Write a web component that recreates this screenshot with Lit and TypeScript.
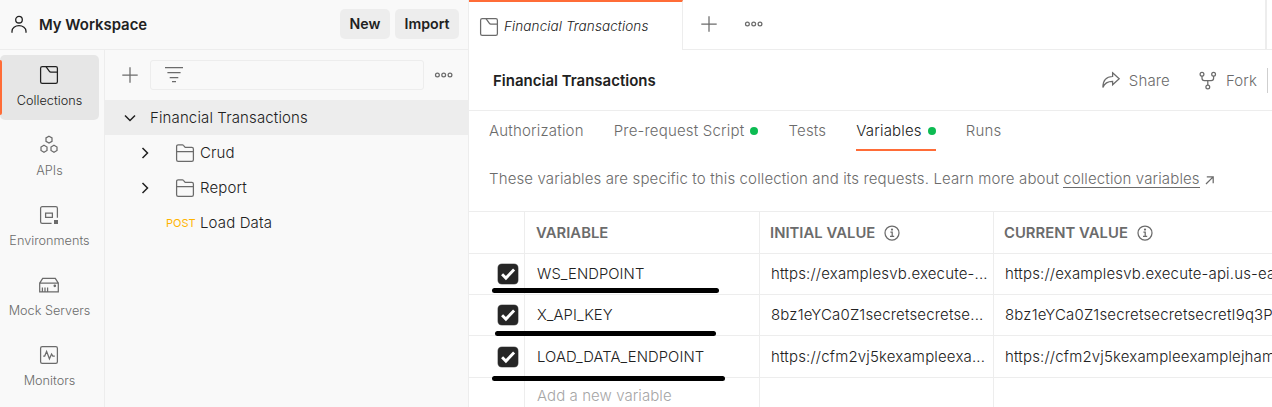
import { LitElement, html, svg, css, nothing } from "lit";
import { customElement, property } from "lit/decorators.js";
import { classMap } from "lit/directives/class-map.js";

const shapes: Record<string, unknown> = {
  user: svg`<circle cx="10" cy="5.7" r="3.3"/><path d="M3 18.8v-1.6a7 5.6 0 0 1 14 0v1.6"/>`,
  collection: svg`<rect x="1.6" y="1.6" width="16.8" height="16.8" rx="1.6"/><path d="M7 1.6l3.6 4.9q.4.5 1 .5h6.8"/>`,
  apis: svg`<path d="M10 1.2l3 1.7v3.5l-3 1.7-3-1.7V2.9zM5 10.3l3 1.7v3.5l-3 1.7-3-1.7V12zM15 10.3l3 1.7v3.5l-3 1.7-3-1.7V12z"/>`,
  environments: svg`<path d="M12.6 18.4H3.2a1.6 1.6 0 0 1-1.6-1.6V3.2a1.6 1.6 0 0 1 1.6-1.6h13.6a1.6 1.6 0 0 1 1.6 1.6v9.6M6.6 8h6.8v4.4H6.6z"/><rect x="15" y="15" width="4" height="4" fill="currentColor" stroke="none"/>`,
  mock: svg`<path d="M.7 8.2v8.6h18.6V8.2zM.7 8.2l3-4.8h12.6l3 4.8M3.4 12.4v4M6 12.4v4M8.6 12.4v4"/><circle cx="15.8" cy="10.8" r=".7" fill="currentColor"/>`,
  monitors: svg`<rect x="1.6" y="1.6" width="16.8" height="16.8" rx="1.6"/><path d="M4.2 11h1.5L7.6 6.4l2.8 7.4L12.6 9l1.2 2h2"/>`,
  plus: svg`<path d="M10 2.3v15.4M2.3 10h15.4"/>`,
  filter: svg`<path d="M1 2.5h18M3.4 7.5h13.2M5.7 12.5h8.6M8 16.6h4"/>`,
  more: svg`<circle cx="3.4" cy="10" r="1.9"/><circle cx="9.7" cy="10" r="1.9"/><circle cx="16" cy="10" r="1.9"/>`,
  down: svg`<path d="M5 7.5l5 5 5-5"/>`,
  right: svg`<path d="M7.5 5l5 5-5 5"/>`,
  folder: svg`<path d="M1.6 16.8V3.4a1.6 1.6 0 0 1 1.6-1.6h4.2q.6 0 1 .5l1.8 2h6.6a1.6 1.6 0 0 1 1.6 1.6v10.9a1.6 1.6 0 0 1-1.6 1.6H3.2a1.6 1.6 0 0 1-1.6-1.6zM1.6 8.6h16.8"/>`,
  share: svg`<path d="M11.6 2.8l6.6 6-6.6 6v-3.4C6.8 11.4 3.6 13 1.9 17.4 1.9 10.4 5.6 6.6 11.6 6.5z"/>`,
  fork: svg`<circle cx="4" cy="4.2" r="1.9"/><circle cx="15.6" cy="4.2" r="1.9"/><circle cx="9.8" cy="16.9" r="1.9"/><path d="M4 6.1v2.2a2.4 2.4 0 0 0 2.4 2.4h6.8a2.4 2.4 0 0 0 2.4-2.4V6.1M9.8 10.7V15"/>`,
  info: svg`<circle cx="10" cy="10" r="7"/><path d="M8.4 9.2h1.8v4.2M8 13.4h4.2"/><circle cx="10" cy="6.6" r=".5" fill="currentColor"/>`,
  external: svg`<path d="M6 14l6.9-6.9M6.8 6.8h6.4v6.4"/>`,
};

@customElement("ui-icon")
class UiIcon extends LitElement {
  @property() name = "";
  static styles = css`
    :host { display: block; flex: none; width: 20px; height: 20px; color: #6b6b6b; }
    svg { display: block; width: 100%; height: 100%; fill: none; stroke: currentColor; stroke-width: var(--stroke, 1.25); }
  `;
  render() {
    return html`<svg viewBox="0 0 20 20">${shapes[this.name]}</svg>`;
  }
}

const nav = [
  { icon: "collection", label: "Collections" },
  { icon: "apis", label: "APIs" },
  { icon: "environments", label: "Environments" },
  { icon: "mock", label: "Mock Servers" },
  { icon: "monitors", label: "Monitors" },
];

const tabs = [
  { label: "Authorization" },
  { label: "Pre-request Script", dot: true },
  { label: "Tests" },
  { label: "Variables", dot: true, active: true },
  { label: "Runs" },
];

const rows = [
  { name: "WS_ENDPOINT", initial: "https://examplesvb.execute-...", current: "https://examplesvb.execute-api.us-ea" },
  { name: "X_API_KEY", initial: "8bz1eYCa0Z1secretsecretse...", current: "8bz1eYCa0Z1secretsecretsecretI9q3P" },
  { name: "LOAD_DATA_ENDPOINT", initial: "https://cfm2vj5kexampleexa...", current: "https://cfm2vj5kexampleexamplejham" },
];

@customElement("app-root")
class AppRoot extends LitElement {
  static styles = css`
    :host { display: block; width: 1272px; height: 407px; overflow: hidden; position: relative; background: #fff; color: #212121; font: 350 15px/20px Inter, "Liberation Sans", sans-serif; letter-spacing: 0.13px; white-space: nowrap; }
    * { box-sizing: border-box; }
    .app { display: grid; grid-template-columns: 469px 803px; height: 407px; }
    .left { display: grid; grid-template-rows: 50px 357px; background: #f9f9f9; border-right: 1px solid #ededed; }
    .top { display: flex; align-items: center; padding: 0 9px; border-bottom: 1px solid #ededed; letter-spacing: 0; }
    .top ui-icon { color: #212121; margin-top: -1px; --stroke: 1.3; }
    .ws { margin-left: 10px; flex: 1; font-weight: 600; font-size: 14.9px; }
    .btn { height: 30px; margin-top: -1px; padding: 5px 0; border-radius: 5px; background: #ededed; font-weight: 600; font-size: 14.2px; text-align: center; }
    .new { width: 50px; margin-right: 5px; }
    .import { width: 64px; }
    .body { display: grid; grid-template-columns: 105px 363px; }
    .nav { display: flex; flex-direction: column; gap: 5px; padding-top: 5px; border-right: 1px solid #ededed; letter-spacing: 0; }
    .item { width: 99px; height: 65px; padding-top: 10px; display: flex; flex-direction: column; align-items: center; gap: 7px; color: #6b6b6b; font-size: 12.7px; line-height: 18px; }
    .item ui-icon { margin-right: 1px; }
    .item.on { position: relative; background: #e6e6e6; border-radius: 5px; color: #212121; }
    .item.on ui-icon { color: #212121; }
    .item.on::before { content: ""; position: absolute; left: 0; top: 5px; width: 2px; height: 55px; background: #ff6c37; border-radius: 0 2px 2px 0; }
    .tools { display: flex; align-items: center; height: 50px; padding-left: 15px; }
    .search { width: 274px; height: 30px; margin: 0 10px; padding: 4px 13px; border: 1px solid #ededed; border-radius: 3px; }
    .row { display: flex; align-items: center; height: 35px; padding-left: 30px; color: #212121; }
    .row.on { background: #ededed; padding-left: 15px; }
    .row.on ui-icon { margin-right: 10px; }
    .arrow { color: #212121; --stroke: 1.5; }
    .folder { margin: 0 5px 0 20px; }
    .post { width: 35px; padding-left: 1px; margin-left: 30px; color: #ffb400; font-size: 11px; font-weight: 430; letter-spacing: 0; }
    .tabbar { display: flex; height: 50px; }
    .tab { display: flex; align-items: center; width: 214px; padding: 1px 0 0 10px; border-right: 1px solid #ededed; border-top: 2px solid #ff6c37; font-size: 13.5px; font-style: italic; letter-spacing: 0.1px; }
    .tab span { margin-left: 5px; margin-top: -1px; }
    .rest { flex: 1; display: flex; align-items: center; padding: 0 0 1px 16px; border-bottom: 1px solid #ededed; }
    .rest ui-icon { margin-right: 25px; }
    .edge { width: 2px; height: 49px; margin: 1px 5px 0 auto; background: #ededed; }
    .head { display: flex; align-items: center; height: 61px; padding-left: 24px; border-bottom: 1px solid #ededed; color: #6b6b6b; }
    .head span { padding-top: 2px; }
    .title { flex: 1; font-weight: 600; color: #212121; letter-spacing: 0; }
    .head ui-icon { margin-right: 8px; }
    .share { margin-right: 28px; }
    .bar { width: 1px; height: 25px; margin: 0 4px 0 10px; background: #cfcfcf; }
    .tabs { display: flex; gap: 30px; height: 40px; padding-left: 20px; color: #6b6b6b; letter-spacing: 0.19px; }
    .t { display: flex; align-items: center; gap: 6px; height: 40px; padding-top: 2px; border-bottom: 2.5px solid transparent; }
    .t.on { color: #212121; border-color: #ff6c37; }
    .dot { width: 8px; height: 8px; border-radius: 50%; background: #0cbb52; }
    .desc { display: flex; align-items: center; height: 60px; padding: 0 0 4px 20px; color: #6b6b6b; }
    .link { margin-left: 4px; border-bottom: 1px solid #6b6b6b; line-height: 17px; }
    .desc ui-icon { margin-top: 1px; }
    .table { display: grid; grid-template-columns: 56px 235px 234px 278px; grid-template-rows: 42px 41px 41px 42px 36px; border-top: 1px solid #ededed; }
    .c { display: flex; align-items: center; border-right: 1px solid #ededed; border-bottom: 1px solid #ededed; padding: 0 3px 0 12px; overflow: hidden; letter-spacing: 0.17px; }
    .c:nth-child(4n) { border-right: 0; padding-right: 0; }
    .c:nth-child(4n + 1) { padding: 0 0 0 29px; }
    .c:nth-child(4n + 3), .c:nth-child(4n) { padding-left: 11px; }
    .c.name { font-size: 14.8px; letter-spacing: 0.08px; }
    .c.h { padding-left: 11px; font-weight: 600; font-size: 14.8px; color: #6b6b6b; letter-spacing: 0.04px; }
    .c.h:nth-child(n + 3) { padding-left: 10px; }
    .h ui-icon { margin-left: 7px; }
    .check { flex: none; width: 20px; height: 20px; background: #262626; border-radius: 4px; box-shadow: 0 0 0 0.6px #8a8a8a; }
    .check svg { display: block; fill: none; stroke: #fff; stroke-width: 3; }
    .c.add { color: #a6a6a6; letter-spacing: 0.07px; }
    .mark { position: absolute; height: 5px; border-radius: 3px; background: #000; }
    .m1 { left: 492px; top: 288px; width: 227px; }
    .m2 { left: 495px; top: 331px; width: 221px; }
    .m3 { left: 492px; top: 376px; width: 233px; }
  `;

  render() {
    return html`
      <div class="app">
        <section class="left">
          <header class="top">
            <ui-icon name="user"></ui-icon>
            <span class="ws">My Workspace</span>
            <div class="btn new">New</div>
            <div class="btn import">Import</div>
          </header>
          <div class="body">
            <nav class="nav">
              ${nav.map((n, i) => html`<div class=${classMap({ item: true, on: i === 0 })}><ui-icon name=${n.icon}></ui-icon><span>${n.label}</span></div>`)}
            </nav>
            <div>
              <div class="tools">
                <ui-icon name="plus"></ui-icon>
                <div class="search"><ui-icon name="filter"></ui-icon></div>
                <ui-icon name="more"></ui-icon>
              </div>
              <div class="row on"><ui-icon class="arrow" name="down"></ui-icon><span>Financial Transactions</span></div>
              ${["Crud", "Report"].map((f) => html`<div class="row"><ui-icon class="arrow" name="right"></ui-icon><ui-icon class="folder" name="folder"></ui-icon><span>${f}</span></div>`)}
              <div class="row"><span class="post">POST</span><span>Load Data</span></div>
            </div>
          </div>
        </section>
        <main>
          <div class="tabbar">
            <div class="tab"><ui-icon name="collection"></ui-icon><span>Financial Transactions</span></div>
            <div class="rest"><ui-icon name="plus"></ui-icon><ui-icon name="more"></ui-icon><div class="edge"></div></div>
          </div>
          <div class="head">
            <span class="title">Financial Transactions</span>
            <ui-icon name="share"></ui-icon><span class="share">Share</span>
            <ui-icon name="fork"></ui-icon><span>Fork</span>
            <div class="bar"></div>
          </div>
          <div class="tabs">
            ${tabs.map((t) => html`<div class=${classMap({ t: true, on: !!t.active })}><span>${t.label}</span>${t.dot ? html`<i class="dot"></i>` : nothing}</div>`)}
          </div>
          <div class="desc">These variables are specific to this collection and its requests. Learn more about <span class="link">collection variables</span><ui-icon name="external"></ui-icon></div>
          <div class="table">
            <div class="c"></div>
            <div class="c h">VARIABLE</div>
            <div class="c h">INITIAL VALUE<ui-icon name="info"></ui-icon></div>
            <div class="c h">CURRENT VALUE<ui-icon name="info"></ui-icon></div>
            ${rows.map((r) => html`
              <div class="c"><div class="check"><svg width="20" height="20" viewBox="0 0 21 21"><path d="M4.3 10.8l4 4 8.6-9"/></svg></div></div>
              <div class="c name">${r.name}</div>
              <div class="c">${r.initial}</div>
              <div class="c">${r.current}</div>`)}
            <div class="c"></div>
            <div class="c add">Add a new variable</div>
            <div class="c"></div>
            <div class="c"></div>
          </div>
        </main>
      </div>
      <div class="mark m1"></div><div class="mark m2"></div><div class="mark m3"></div>
    `;
  }
}
